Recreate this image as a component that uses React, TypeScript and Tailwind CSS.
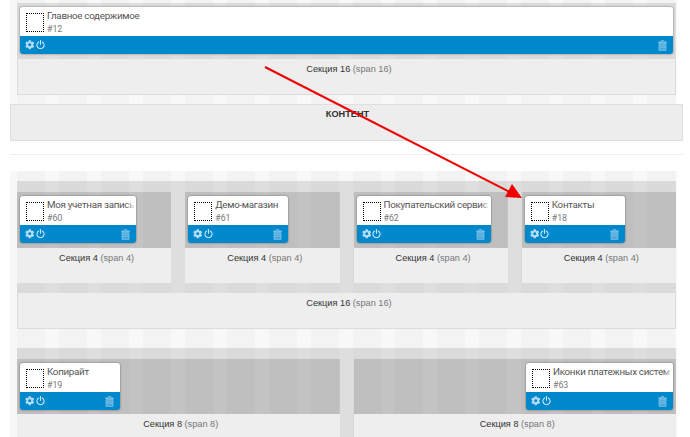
import { FaCog } from "react-icons/fa";

function Trash() {
  return (
    <svg width="9" height="11" viewBox="0 0 9 11" className="shrink-0">
      <path d="M3 1.5V.7h3v.8" fill="none" stroke="#8fcaeb" strokeWidth="0.8" />
      <rect x="0.2" y="1.6" width="8.6" height="1.2" fill="#8fcaeb" />
      <path d="M1 3.4h7v6.6a.8.8 0 0 1-.8.8H1.8a.8.8 0 0 1-.8-.8z" fill="#4aa8dc" stroke="#8fcaeb" strokeWidth="0.7" />
      <path d="M1.5 5.3h6M1.5 7.3h6" stroke="#8fcaeb" strokeWidth="0.6" />
    </svg>
  );
}

function Power() {
  return (
    <svg width="9" height="10" viewBox="0 0 10 11" fill="none" stroke="#cfe8f6" strokeWidth="1.2" className="shrink-0">
      <path d="M3 2.2a4 4 0 1 0 4 0" strokeLinecap="round" />
      <path d="M5 .5v4.3" strokeLinecap="round" />
    </svg>
  );
}

function Card({ title, id, w, fade }: { title: string; id: string; w: string; fade?: boolean }) {
  return (
    <div className={`${w} h-[47px] rounded-[3px] overflow-hidden shadow-[0_0_2px_rgba(0,0,0,0.55)] flex flex-col`}>
      <div className="h-[29px] bg-white relative flex pl-[6px] pt-[6px] gap-[3px] overflow-hidden">
        <div className="w-[18px] h-[19px] shrink-0 border border-dotted border-black" />
        <div className="flex flex-col min-w-0 -mt-[5px]">
          <div className="text-[9.8px] tracking-[-0.3px] leading-[15px] text-[#555] whitespace-nowrap font-['Roboto',sans-serif]">{title}</div>
          <div className="text-[8.8px] leading-[11px] mt-[1px] text-[#777] font-['Roboto',sans-serif]">{id}</div>
        </div>
        {fade && <div className="absolute right-0 top-0 bottom-0 w-[10px] bg-gradient-to-r from-transparent to-white" />}
      </div>
      <div className="h-[18px] bg-[#0088cc] flex items-center pl-[5px] pr-[6px]">
        <FaCog className="w-[9.5px] h-[9.5px] text-[#b5dcf2]" />
        <span className="ml-[1px] flex"><Power /></span>
        <span className="ml-auto flex"><Trash /></span>
      </div>
    </div>
  );
}

function Label({ n, h, border = true }: { n: number; h: string; border?: boolean }) {
  return (
    <div className={`${h} bg-[#eeeeee] ${border ? "border border-t-0 border-[#dcdcdc]" : ""} text-center pt-[3px] pl-[5px] text-[9.2px] leading-[14px] font-['Liberation_Sans',sans-serif] text-[#333]`}>
      Секция {n} <span className="text-[#777]">(span {n})</span>
    </div>
  );
}

function Column({ title, id, w, fade }: { title: string; id: string; w: string; fade?: boolean }) {
  return (
    <div>
      <div className="h-[56px] bg-black/[0.12] pt-[4px] pl-[3px]">
        <Card title={title} id={id} w={w} fade={fade} />
      </div>
      <Label n={4} h="h-[35px]" border={false} />
    </div>
  );
}

export default function App() {
  return (
    <div className="relative h-[437px] w-[690px] overflow-hidden bg-white">
      <div className="ml-[10px] w-[667px] h-[104px] pt-[3px] pl-[7px] bg-[repeating-linear-gradient(90deg,#f8f8f8_0px,#f8f8f8_7px,#f3f3f3_7px,#f3f3f3_35px,#f8f8f8_35px,#f8f8f8_42px)]">
        <div className="w-[659px]">
          <div className="h-[56px] bg-black/10 pt-[4px] px-[3px]">
            <Card title="Главное содержимое" id="#12" w="w-full" />
          </div>
          <Label n={16} h="h-[36px]" />
        </div>
      </div>

      <div className="ml-[10px] w-[673px] h-[37px] bg-[#ededed] border border-[#dedede] text-center text-[9.2px] leading-[14px] pt-[2px] pl-[2px] font-bold text-[#333] font-['Liberation_Sans',sans-serif]">
        КОНТЕНТ
      </div>

      <div className="ml-[10px] w-[673px] h-px mt-[13px] bg-[#eeeeee]" />

      <div className="ml-[10px] w-[667px] mt-[16px] pt-[10px] pl-[7px] h-[266px] bg-[repeating-linear-gradient(90deg,#f8f8f8_0px,#f8f8f8_7px,#f3f3f3_7px,#f3f3f3_35px,#f8f8f8_35px,#f8f8f8_42px)]">
        <div className="w-[659px]">
          <div className="bg-black/10 pt-[11px] pb-[10px] grid grid-cols-4 gap-[14px]">
            <Column title="Моя учетная запись" id="#60" w="w-[116px]" fade />
            <Column title="Демо-магазин" id="#61" w="w-[100px]" />
            <Column title="Покупательский сервис" id="#62" w="w-[134px]" fade />
            <Column title="Контакты" id="#18" w="w-[100px]" />
          </div>
          <Label n={16} h="h-[36px]" />
          <div className="mt-[19px] bg-black/10 pt-[11px] grid grid-cols-2 gap-[14px]">
            <div>
              <div className="h-[55px] bg-black/[0.12] pt-[4px] pl-[3px]">
                <Card title="Копирайт" id="#19" w="w-[100px]" />
              </div>
              <Label n={8} h="h-[35px]" border={false} />
            </div>
            <div>
              <div className="h-[55px] bg-black/[0.12] pt-[4px] pr-[3px] flex justify-end">
                <Card title="Иконки платежных систем" id="#63" w="w-[147px]" fade />
              </div>
              <Label n={8} h="h-[35px]" border={false} />
            </div>
          </div>
        </div>
      </div>

      <svg className="absolute left-0 top-0 pointer-events-none" width="690" height="437">
        <line x1="265" y1="67" x2="510" y2="192" stroke="#f00000" strokeWidth="2" />
        <polygon points="522,198 505,197 512,184" fill="#f00000" />
      </svg>
    </div>
  );
}
